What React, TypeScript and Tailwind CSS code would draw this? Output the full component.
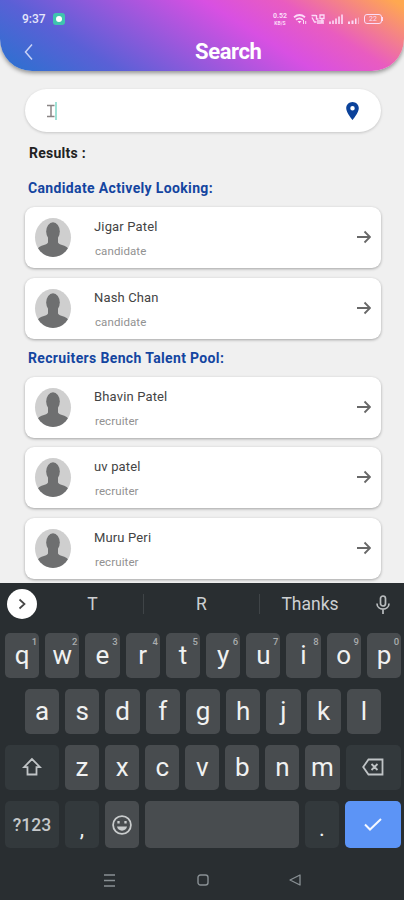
import React from 'react';

interface Person {
  name: string;
  role: string;
}

const candidates: Person[] = [
  { name: 'Jigar Patel', role: 'candidate' },
  { name: 'Nash Chan', role: 'candidate' },
];

const recruiters: Person[] = [
  { name: 'Bhavin Patel', role: 'recruiter' },
  { name: 'uv patel', role: 'recruiter' },
  { name: 'Muru Peri', role: 'recruiter' },
];

export default function App() {
  return (
    <div className="w-[404px] h-[900px] overflow-hidden flex flex-col bg-[#f0f0f0] font-['Roboto',sans-serif]">
      <Header />
      <main className="h-[512px] shrink-0 pl-[25px] pr-[23px] pt-[18px]">
        <SearchField />
        <h2 className="mt-[11px] ml-1 h-5 text-[14px] leading-5 font-bold tracking-[0.25px] text-[#222]">Results :</h2>
        <SectionTitle className="mt-[15px]">Candidate Actively Looking:</SectionTitle>
        <PersonList people={candidates} />
        <SectionTitle className="mt-[9px]">Recruiters Bench Talent Pool:</SectionTitle>
        <PersonList people={recruiters} />
      </main>
      <Keyboard />
    </div>
  );
}

function Header() {
  return (
    <header className="relative z-10 h-[71px] shrink-0 rounded-b-[32px] bg-[linear-gradient(32deg,#2f70d0_3%,#5a60d6_23%,#d850e2_61%,#e95cc0_76%,#ffa850_98%)] shadow-[0_2px_4px_rgba(0,0,0,0.4)] text-white">
      <div className="flex items-center h-[37px] pl-[22px] pr-[21px]">
        <span className="w-[31px] text-[12px] font-medium text-[#e6e6fa]">9:37</span>
        <span className="w-3 h-3 rounded-[3px] bg-[#3fc4ae] flex items-center justify-center">
          <span className="w-1.5 h-1.5 rounded-full bg-white" />
        </span>
        <StatusIcons />
      </div>
      <div className="flex items-center h-[29px] pl-6">
        <svg width="10" height="18" viewBox="0 0 10 18" fill="none" stroke="#c9d2f5" strokeWidth="1.5">
          <path d="M8 1.5 1.5 9 8 16.5" />
        </svg>
        <h1 className="ml-[161px] pt-px text-[22px] leading-[30px] font-bold tracking-[-0.4px]">Search</h1>
      </div>
    </header>
  );
}

function StatusIcons() {
  return (
    <div className="ml-auto flex items-center text-[#fbdcf8]">
      <div className="w-[18px] flex flex-col items-center font-bold">
        <span className="text-[7px] leading-[8px]">0.52</span>
        <span className="text-[5px] leading-[6px]">KB/S</span>
      </div>
      <svg className="ml-1" width="14" height="12" viewBox="0 0 14 12" fill="none" stroke="currentColor" strokeWidth="1.8">
        <path d="M1 4.2Q6.5-.2 12 4.2M3 6.8q3.500-2.800 7 0" />
        <path d="M4.500 8h4L6.500 10.500z" fill="currentColor" stroke="none" />
        <path d="M10.500 7v4M12.700 8v3" strokeWidth="1" />
      </svg>
      <svg className="ml-1" width="14" height="12" viewBox="0 0 14 12" fill="none" stroke="currentColor" strokeWidth="1.3">
        <path d="M.5 2.500h4.500M1 4.500l2.500 4.500h2M5.500 2v4h2M9 2h4v3.500H9zM6 8h7M6 10h7M11 5v5" />
      </svg>
      <svg className="ml-1" width="14" height="12" viewBox="0 0 14 12" fill="currentColor">
        <path d="M0 8.500h2V11H0zM3 7.500h2V11H3zM6 5.500h2V11H6zM9 3.500h2V11H9zM12 1.500h2V11h-2z" opacity=".8" />
      </svg>
      <svg className="ml-1" width="13" height="12" viewBox="0 0 13 12" fill="currentColor">
        <path d="M1 8.500h2V11H1zM4.500 7.500h2V11h-2zM8 5.500h1.500V11H8z" />
        <path d="M11 4.500h1V11h-1z" opacity=".5" />
      </svg>
      <div className="ml-1 w-[18px] h-[10px] rounded-[3px] border border-current text-[7px] leading-[8px] text-center">22</div>
      <div className="w-px h-1 bg-current" />
    </div>
  );
}

function SearchField() {
  return (
    <div className="h-[43px] rounded-full bg-white shadow-[0_1px_3px_rgba(0,0,0,0.18)] flex items-center justify-between pl-[22px] pr-[22px]">
      <svg width="10" height="20" viewBox="0 0 10 20" fill="none">
        <path d="M0 4.500h7.500M4 5v10.500M0 15.500h7.500" stroke="#8a8585" strokeWidth="1.500" />
        <path d="M9 1v18" stroke="#7fd8c8" strokeWidth="1.500" />
      </svg>
      <svg width="13" height="18" viewBox="5 2 14 20" fill="#0b429a">
        <path d="M12 2C8.130 2 5 5.130 5 9c0 5.250 7 13 7 13s7-7.750 7-13c0-3.870-3.130-7-7-7zm0 9.500a2.500 2.500 0 1 1 0-5 2.500 2.500 0 0 1 0 5z" />
      </svg>
    </div>
  );
}

function SectionTitle({ children, className }: { children: React.ReactNode; className: string }) {
  return (
    <h3 className={`${className} ml-[3px] h-5 text-[14px] leading-5 font-bold tracking-[0.350px] text-[#1445a0]`}>
      {children}
    </h3>
  );
}

function PersonList({ people }: { people: Person[] }) {
  return (
    <ul className="mt-[9px] flex flex-col gap-[9.500px]">
      {people.map(person => (
        <li key={person.name} className="h-[61px] rounded-[9px] bg-white shadow-[0_1px_3px_rgba(0,0,0,0.32)] flex items-center pl-[10px] pr-[10px]">
          <Avatar />
          <div className="ml-[23px] h-full pt-[10px]">
            <div className="text-[13px] leading-5 tracking-[0.150px] text-[#444]">{person.name}</div>
            <div className="mt-1 ml-[1px] text-[11.500px] leading-5 tracking-[0.1px] text-[#919191]">{person.role}</div>
          </div>
          <svg className="ml-auto mb-px" width="14" height="14" viewBox="0 0 14 14" fill="none" stroke="#686868" strokeWidth="1.800">
            <path d="M0 7h13M7.500 1.500 13 7l-5.500 5.500" />
          </svg>
        </li>
      ))}
    </ul>
  );
}

function Avatar() {
  return (
    <svg width="36" height="39" viewBox="0 0 36 39" className="rounded-[50%] bg-[#cfcfcf]">
      <ellipse cx="18" cy="13.500" rx="6.800" ry="9.200" fill="#6e6f70" />
      <path
        d="M13 18h10v6.500c1.500 3 8 2.500 10 6L36 39H0l3-8.500c2-3.500 8.500-3 10-6z"
        fill="#6e6f70"
      />
    </svg>
  );
}

function Keyboard() {
  return (
    <section className="h-[317px] shrink-0 bg-[#292e31] text-[#f0f1f1] pl-[5px] pr-[3px]">
      <div className="flex items-center h-[42px] text-[17.500px] text-[#cdd0d2]">
        <div className="ml-[2px] w-[30px] h-[30px] rounded-full bg-white flex items-center justify-center">
          <svg width="8" height="12" viewBox="0 0 8 12" fill="none" stroke="#454545" strokeWidth="1.700">
            <path d="m1.500 1.500 5 4.500-5 4.500" />
          </svg>
        </div>
        <span className="w-[106px] pl-[5px] text-center">T</span>
        <span className="w-px h-5 bg-[#3f4447]" />
        <span className="w-[115px] text-center">R</span>
        <span className="w-px h-5 bg-[#3f4447]" />
        <span className="w-[100px] text-center">Thanks</span>
        <svg className="ml-[16px]" width="14" height="19" viewBox="0 0 14 19" fill="none" stroke="#b9bdbf" strokeWidth="1.700">
          <rect x="4.500" y="1" width="5" height="10" rx="2.500" />
          <path d="M1 8.500c0 7.500 12 7.500 12 0M7 14.500V19" />
        </svg>
      </div>
      <div className="mt-2 flex flex-col gap-[11.500px]">
        <div className="flex gap-[6px]">
          {'qwertyuiop'.split('').map((letter, i) => (
            <Key key={letter} letter={letter} hint={String((i + 1) % 10)} />
          ))}
        </div>
        <div className="flex gap-[6px] px-5">
          {'asdfghjkl'.split('').map(letter => <Key key={letter} letter={letter} />)}
        </div>
        <div className="flex gap-[6px]">
          <div className="w-[54px] rounded-[5px] bg-[#33393c] flex items-center justify-center">
            <svg width="20" height="20" viewBox="0 0 20 20" fill="none" stroke="#c0c4c6" strokeWidth="1.800">
              <path d="M10 2 2 10.200H5.500V17.500h9v-7.300H18z" />
            </svg>
          </div>
          {'zxcvbnm'.split('').map(letter => <Key key={letter} letter={letter} />)}
          <div className="w-[55.500px] rounded-[5px] bg-[#33393c] flex items-center justify-center">
            <svg width="22" height="18" viewBox="0 0 22 18" fill="none" stroke="#c0c4c6" strokeWidth="1.800">
              <path d="M6.500 1.500h14v15h-14L1.200 9zM9.500 6l6 6M15.500 6l-6 6" />
            </svg>
          </div>
        </div>
        <div className="flex gap-[6px] h-[47px]">
          <div className="w-[54px] rounded-[5px] bg-[#33393c] flex items-center justify-center text-[17.500px] font-medium text-[#c5c8ca] pt-0.5">?123</div>
          <div className="w-[34px] rounded-[5px] bg-[#33393c] flex items-center justify-center text-[22px] pt-2">,</div>
          <div className="w-[34px] rounded-[5px] bg-[#484c4f] flex items-center justify-center">
            <svg width="20" height="20" viewBox="0 0 20 20" fill="none" stroke="#c9cccd" strokeWidth="1.800">
              <circle cx="10" cy="10" r="8.900" />
              <path d="M5 11.500h10c-.5 5.500-9.500 5.500-10 0z" fill="#c9cccd" stroke="none" />
              <path d="M6.500 6v2.500M13.500 6v2.500" strokeWidth="2.300" />
            </svg>
          </div>
          <div className="flex-1 rounded-[5px] bg-[#484c4f]" />
          <div className="w-[34px] rounded-[5px] bg-[#33393c] flex items-center justify-center text-[22px] pt-2">.</div>
          <div className="w-[56px] rounded-[5px] bg-[#5c94f6] flex items-center justify-center">
            <svg width="18" height="13" viewBox="0 0 18 13" fill="none" stroke="#f5f8ff" strokeWidth="2">
              <path d="m1 6.500 5 5L17 1" />
            </svg>
          </div>
        </div>
      </div>
      <NavigationBar />
    </section>
  );
}

function Key({ letter, hint }: { letter: string; hint?: string }) {
  return (
    <div className="relative flex-1 h-[44.500px] rounded-[5px] bg-[#484c4f] flex items-center justify-center text-[26px] pt-px">
      {letter}
      {hint && <span className="absolute top-[3px] right-[2px] text-[9.500px] leading-[12px] font-medium text-[#a9acae]">{hint}</span>}
    </div>
  );
}

function NavigationBar() {
  return (
    <nav className="mt-[24px] h-4 flex items-center">
      <svg className="ml-[99px]" width="11" height="13" viewBox="0 0 11 13" fill="none" stroke="#899094" strokeWidth="1.400">
        <path d="M0 1h11M0 6.500h11M0 12h11" />
      </svg>
      <svg className="ml-[82px]" width="12" height="12" viewBox="0 0 12 12" fill="none" stroke="#899094" strokeWidth="1.400">
        <rect x="1" y="1" width="10" height="10" rx="2.500" />
      </svg>
      <svg className="ml-[80px]" width="12" height="12" viewBox="0 0 12 12" fill="none" stroke="#899094" strokeWidth="1.300">
        <path d="M1 6 11 1v10z" strokeLinejoin="round" />
      </svg>
    </nav>
  );
}
